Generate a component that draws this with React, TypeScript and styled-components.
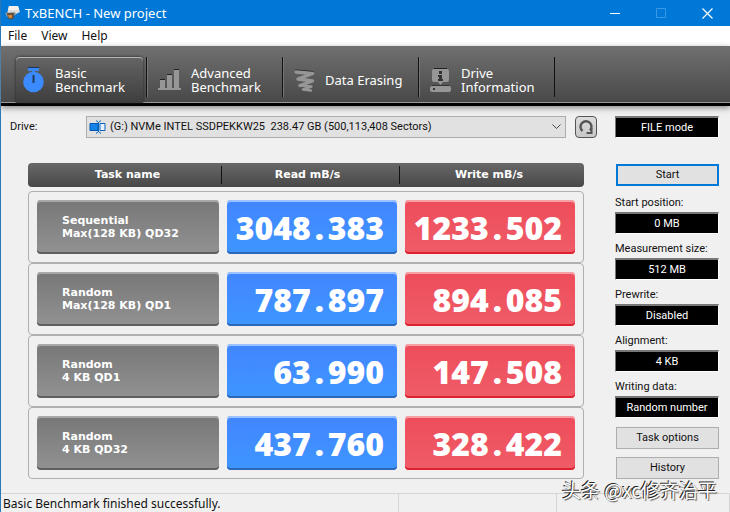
import React from "react";
import styled, { createGlobalStyle, css } from "styled-components";

const GlobalStyle = createGlobalStyle`
  *, *::before, *::after { box-sizing: border-box; }
  html, body { margin: 0; background: #f0f0f0; }
  body { font: 11px/14px Roboto, "Noto Sans CJK SC", sans-serif; color: #111; }
  button, select { font: inherit; color: inherit; margin: 0; padding: 0; }
`;

const Window = styled.div`
  position: relative;
  display: flex;
  flex-direction: column;
  min-height: 100vh;
  border-left: 1px solid #2a78b8;
  background: #f0f0f0;
`;

const TitleBar = styled.header`
  display: flex;
  align-items: center;
  height: 26px;
  padding-left: 3px;
  background: #0078d7;
  color: #fff;
`;

const Title = styled.h1`
  flex: 1;
  margin: 0 0 0 4px;
  font: 400 13px/16px "Noto Sans", sans-serif;
`;

const WindowButton = styled.button`
  display: flex;
  align-items: center;
  justify-content: center;
  width: 46px;
  height: 26px;
  border: 0;
  background: none;
`;

const MenuBar = styled.nav`
  display: flex;
  gap: 14px;
  height: 20px;
  padding-left: 7px;
  background: #fff;
`;

const MenuItem = styled.button`
  border: 0;
  background: none;
  font: 12px/20px "Noto Sans", sans-serif;
`;

const Toolbar = styled.nav`
  display: flex;
  align-items: flex-end;
  height: 60px;
  padding-left: 10px;
  background: linear-gradient(#707070, #484848);
  border-bottom: 3px solid #000;
  box-shadow: inset 0 -1px #999, 0 2px 6px #888;
`;

const TabSlot = styled.div`
  display: flex;
  width: 136px;
  height: 46px;
  padding: 0 4px 0 5px;
  background: linear-gradient(#111, #111) right top / 1px 40px no-repeat;
  & + & {
    background: linear-gradient(#111, #111) right top / 1px 40px no-repeat,
      linear-gradient(#777, #777) left top / 1px 40px no-repeat;
  }
`;

const Tab = styled.button<{ $active?: boolean }>`
  display: flex;
  align-items: center;
  gap: 10px;
  flex: 1;
  padding: 0 0 0 6px;
  border: 0;
  background: none;
  color: #fff;
  font: 13px/14px "Noto Sans", sans-serif;
  text-align: left;
  white-space: pre;
  ${(p) =>
    p.$active &&
    css`
      border-radius: 4px 4px 0 0;
      background: linear-gradient(#656565, #3d3d3d);
      box-shadow: inset 0 1px #b5b5b5, 0 0 3px #222;
    `}
`;

const Body = styled.main`
  display: grid;
  grid-template-columns: minmax(0, 1fr) 104px;
  column-gap: 18px;
  flex: 1;
  padding: 10px 11px 14px 9px;
`;

const Main = styled.section`
  min-width: 0;
`;

const DriveRow = styled.div`
  display: flex;
  align-items: center;
  gap: 9px;
`;

const DriveLabel = styled.label`
  width: 67px;
`;

const DriveBox = styled.div`
  display: flex;
  align-items: center;
  flex: 1;
  min-width: 0;
  height: 22px;
  padding: 0 4px 0 2px;
  border: 1px solid #adadad;
  background: #e1e1e1;
`;

const DriveSelect = styled.select`
  flex: 1;
  min-width: 0;
  margin-left: 4px;
  border: 0;
  background: none;
  appearance: none;
  white-space: pre;
`;

const RefreshButton = styled.button`
  display: flex;
  align-items: center;
  justify-content: center;
  width: 22px;
  height: 22px;
  border: 1px solid #555;
  border-radius: 4px;
  background: linear-gradient(#ddd, #c8c8c8);
`;

const Results = styled.table`
  display: block;
  margin: 25px 13px 0 18px;
`;

const Head = styled.thead`
  display: block;
  margin-bottom: 4px;
`;

const HeadRow = styled.tr`
  display: grid;
  grid-template-columns: 194fr 178fr 184fr;
  align-items: center;
  height: 24px;
  border-radius: 4px;
  background: linear-gradient(#686868, #484848);
`;

const HeadCell = styled.th`
  padding: 0 6px 0 0;
  border-right: 1px solid #111;
  color: #fff;
  font: bold 11px/18px "DejaVu Sans", sans-serif;
  &:first-child { padding-left: 12px; }
  &:last-child { border: 0; }
`;

const Rows = styled.tbody`
  display: block;
`;

const ResultRow = styled.tr`
  display: grid;
  grid-template-columns: 182fr 170fr 170fr;
  gap: 8px;
  height: 72px;
  padding: 8px;
  border: 1px solid #b0b0b0;
  border-radius: 4px;
`;

const TaskCell = styled.td`
  display: flex;
  padding: 0;
`;

const TaskButton = styled.button`
  flex: 1;
  height: 54px;
  padding: 0 0 0 25px;
  border: 0;
  border-radius: 4px;
  background: linear-gradient(#777, #929292);
  box-shadow: inset 0 2px #a8a8a8, inset 0 -2px #606060;
  color: #fff;
  font: bold 11px/13px "DejaVu Sans", sans-serif;
  text-align: left;
  white-space: pre;
`;

const SpeedCell = styled.td<{ $kind: "read" | "write" }>`
  height: 54px;
  padding: 2px 13px 0 0;
  border-radius: 4px;
  color: #fff;
  font: 800 32px/52px "Open Sans", sans-serif;
  text-align: right;
  white-space: nowrap;
  ${(p) =>
    p.$kind === "read"
      ? css`
          background: linear-gradient(#4285ff, #3e96ff);
          box-shadow: inset 0 2px #9bc2ff, inset 0 -2px #2c68b8;
        `
      : css`
          background: linear-gradient(#ee4d5a, #ef5c68);
          box-shadow: inset 0 2px #f7a0a6, inset 0 -2px #df2230;
        `}
`;

const Point = styled.span`
  display: inline-block;
  width: 17px;
  text-align: center;
`;

const Side = styled.aside`
  display: flex;
  flex-direction: column;
`;

const ValueButton = styled.button`
  width: 100%;
  height: 22px;
  border: 1px solid #fff;
  border-top: 2px solid #777;
  border-left-color: #777;
  background: #000;
  color: #fff;
`;

const PushButton = styled.button<{ $primary?: boolean }>`
  height: 22px;
  margin-left: 1px;
  border: ${(p) => (p.$primary ? "2px solid #0078d7" : "1px solid #adadad")};
  background: #e1e1e1;
`;

const Settings = styled.div`
  margin: 8px 0 3px;
`;

const StartArea = styled.div`
  display: grid;
  margin-top: 26px;
`;

const Actions = styled.div`
  display: grid;
  gap: 8px;
`;

const Field = styled.div`
  height: 46px;
  padding-top: 1px;
`;

const FieldLabel = styled.label`
  display: block;
  height: 17px;
  line-height: 16px;
  white-space: nowrap;
`;

const StatusBar = styled.footer`
  display: grid;
  grid-template-columns: 398fr 158fr 173fr;
  height: 19px;
  border-top: 1px solid #d5d5d5;
`;

const StatusCell = styled.div`
  padding-left: 2px;
  border-right: 1px solid #d5d5d5;
  font: 12px/20px "Noto Sans", sans-serif;
  white-space: nowrap;
`;

const Watermark = styled.div`
  position: absolute;
  right: 13px;
  bottom: 10px;
  color: #fff;
  font: 19px/24px "Noto Sans CJK SC", sans-serif;
  white-space: nowrap;
  text-shadow: -1px -1px #222, 1px 1px 1px #555;
  pointer-events: none;
`;

const AppIcon = () => (
  <svg width="17" height="16" viewBox="0 0 17 16" aria-hidden="true">
    <path d="M5 1h9l2 6-4 2H3z" fill="#ddd" />
    <path d="M5 1h9l1 4H4z" fill="#f5f0ea" />
    <path d="M1 8l10-1 1 3-9 2z" fill="#8a939b" />
    <path d="M3 8h7v5q-3 3-6 0z" fill="#66503f" />
    <path d="M4 10h4v3H5z" fill="#d08a3c" />
  </svg>
);

const TimerIcon = () => (
  <svg width="23" height="26" viewBox="0 0 23 26" aria-hidden="true">
    <path d="M6 1h11v3H6z" fill="#3b87f7" />
    <path d="M6 0h11v1H6z" fill="#203354" />
    <path d="M10 3h3v3h-3z" fill="#3b87f7" />
    <circle cx="11.500" cy="15" r="10.300" fill="#3b8bff" />
    <path d="M11.500 8v8" stroke="#23395c" strokeWidth="2" />
  </svg>
);

const BarsIcon = () => (
  <svg width="23" height="22" viewBox="0 0 23 22" aria-hidden="true">
    <path d="M2 11h5v8H2zM9 6h5v13H9zM16 1h5v18h-5zM0 19h23v2H0z" fill="#969696" />
    <path d="M2 10h5v1H2zM9 5h5v1H9zM16 0h5v1h-5z" fill="#222" />
  </svg>
);

const EraseIcon = () => (
  <svg width="21" height="23" viewBox="0 0 21 23" aria-hidden="true" fill="none" strokeLinecap="round" strokeLinejoin="round">
    <path d="M2 1.500L18.500 3" stroke="#222" strokeWidth="2" />
    <path d="M2 3L18.500 4.500 4 10 18.500 12 6 16.500" stroke="#969696" strokeWidth="3.400" />
    <path d="M6 16.500L17.500 17.500 9 20.500 17 21.500" stroke="#969696" strokeWidth="2.400" />
  </svg>
);

const InfoIcon = () => (
  <svg width="21" height="24" viewBox="0 0 21 24" aria-hidden="true">
    <path d="M4 0h13v2H4z" fill="#222" />
    <path d="M4 1h13q2 0 2 2v9q0 2-2 2h-4l-2.500 3L8 14H4q-2 0-2-2V3q0-2 2-2z" fill="#969696" />
    <path d="M9 3h3v3H9zM8 7h4v4h1v2H8v-2h1V9H8z" fill="#333" />
    <rect y="18" width="21" height="6" rx="2" fill="#969696" />
    <path d="M2 17h17v1H2zM3 20h2v2H3z" fill="#333" />
  </svg>
);

const DriveIcon = () => (
  <svg width="17" height="14" viewBox="0 0 17 14" aria-hidden="true" fill="none">
    <path d="M1 3.500h8v7H1z" fill="#1683e8" stroke="#0057b0" />
    <path d="M11 3.500h5v7h-5z" fill="#e8f3ff" stroke="#0063bd" />
    <path d="M7 .5l2.500 2 2.500-2M9.500 2.500v9M7 13.500l2.500-2 2.500 2" stroke="#0063bd" />
  </svg>
);

const RefreshIcon = () => (
  <svg width="16" height="16" viewBox="0 0 16 16" fill="none" aria-hidden="true">
    <path d="M4.500 12A5.500 5.500 0 1 1 12 11.500" stroke="#555" strokeWidth="2.400" />
    <path d="M8.500 14h6M13.500 14.500V9" stroke="#555" strokeWidth="2" />
  </svg>
);

const tabs = [
  { label: "Basic\nBenchmark", icon: <TimerIcon />, active: true },
  { label: "Advanced\nBenchmark", icon: <BarsIcon /> },
  { label: "Data Erasing", icon: <EraseIcon /> },
  { label: "Drive\nInformation", icon: <InfoIcon /> },
];

const results = [
  { task: "Sequential\nMax(128 KB) QD32", read: "3048.383", write: "1233.502" },
  { task: "Random\nMax(128 KB) QD1", read: "787.897", write: "894.085" },
  { task: "Random\n4 KB QD1", read: "63.990", write: "147.508" },
  { task: "Random\n4 KB QD32", read: "437.760", write: "328.422" },
];

const settings = [
  { id: "position", label: "Start position:", value: "0 MB" },
  { id: "size", label: "Measurement size:", value: "512 MB" },
  { id: "prewrite", label: "Prewrite:", value: "Disabled" },
  { id: "alignment", label: "Alignment:", value: "4 KB" },
  { id: "data", label: "Writing data:", value: "Random number" },
];

function Speed({ kind, value }: { kind: "read" | "write"; value: string }) {
  const [whole, fraction] = value.split(".");
  return (
    <SpeedCell $kind={kind}>
      {whole}
      <Point>.</Point>
      {fraction}
    </SpeedCell>
  );
}

export default function App() {
  return (
    <Window>
      <GlobalStyle />
      <TitleBar>
        <AppIcon />
        <Title>TxBENCH - New project</Title>
        <WindowButton aria-label="Minimize">
          <svg width="10" height="10"><path d="M0 5.500h10" stroke="#fff" /></svg>
        </WindowButton>
        <WindowButton aria-label="Maximize" disabled>
          <svg width="10" height="10"><path d="M.5.5h9v9h-9z" fill="none" stroke="#3a98e4" /></svg>
        </WindowButton>
        <WindowButton aria-label="Close">
          <svg width="11" height="11"><path d="M.5.5l10 10m0-10l-10 10" stroke="#fff" strokeWidth="1.200" /></svg>
        </WindowButton>
      </TitleBar>
      <MenuBar>
        <MenuItem>File</MenuItem>
        <MenuItem>View</MenuItem>
        <MenuItem>Help</MenuItem>
      </MenuBar>
      <Toolbar>
        {tabs.map((tab) => (
          <TabSlot key={tab.label}>
            <Tab $active={tab.active}>
              {tab.icon}
              <span>{tab.label}</span>
            </Tab>
          </TabSlot>
        ))}
      </Toolbar>
      <Body>
        <Main>
          <DriveRow>
            <DriveLabel htmlFor="drive">Drive:</DriveLabel>
            <DriveBox>
              <DriveIcon />
              <DriveSelect id="drive">
                <option>{"(G:) NVMe INTEL SSDPEKKW25\u00a0 238.47 GB (500,113,408 Sectors)"}</option>
              </DriveSelect>
              <svg width="9" height="6" aria-hidden="true">
                <path d="M.5.5l4 4 4-4" fill="none" stroke="#444" />
              </svg>
            </DriveBox>
            <RefreshButton aria-label="Refresh drives">
              <RefreshIcon />
            </RefreshButton>
          </DriveRow>
          <Results>
            <Head>
              <HeadRow>
                <HeadCell>Task name</HeadCell>
                <HeadCell>Read mB/s</HeadCell>
                <HeadCell>Write mB/s</HeadCell>
              </HeadRow>
            </Head>
            <Rows>
              {results.map((row) => (
                <ResultRow key={row.task}>
                  <TaskCell><TaskButton>{row.task}</TaskButton></TaskCell>
                  <Speed kind="read" value={row.read} />
                  <Speed kind="write" value={row.write} />
                </ResultRow>
              ))}
            </Rows>
          </Results>
        </Main>
        <Side>
          <ValueButton>FILE mode</ValueButton>
          <StartArea>
            <PushButton $primary>Start</PushButton>
          </StartArea>
          <Settings>
            {settings.map((s) => (
              <Field key={s.id}>
                <FieldLabel htmlFor={s.id}>{s.label}</FieldLabel>
                <ValueButton id={s.id}>{s.value}</ValueButton>
              </Field>
            ))}
          </Settings>
          <Actions>
            <PushButton>Task options</PushButton>
            <PushButton>History</PushButton>
          </Actions>
        </Side>
      </Body>
      <StatusBar>
        <StatusCell>Basic Benchmark finished successfully.</StatusCell>
        <StatusCell />
        <StatusCell />
      </StatusBar>
      <Watermark>头条 @xc修齐治平</Watermark>
    </Window>
  );
}
